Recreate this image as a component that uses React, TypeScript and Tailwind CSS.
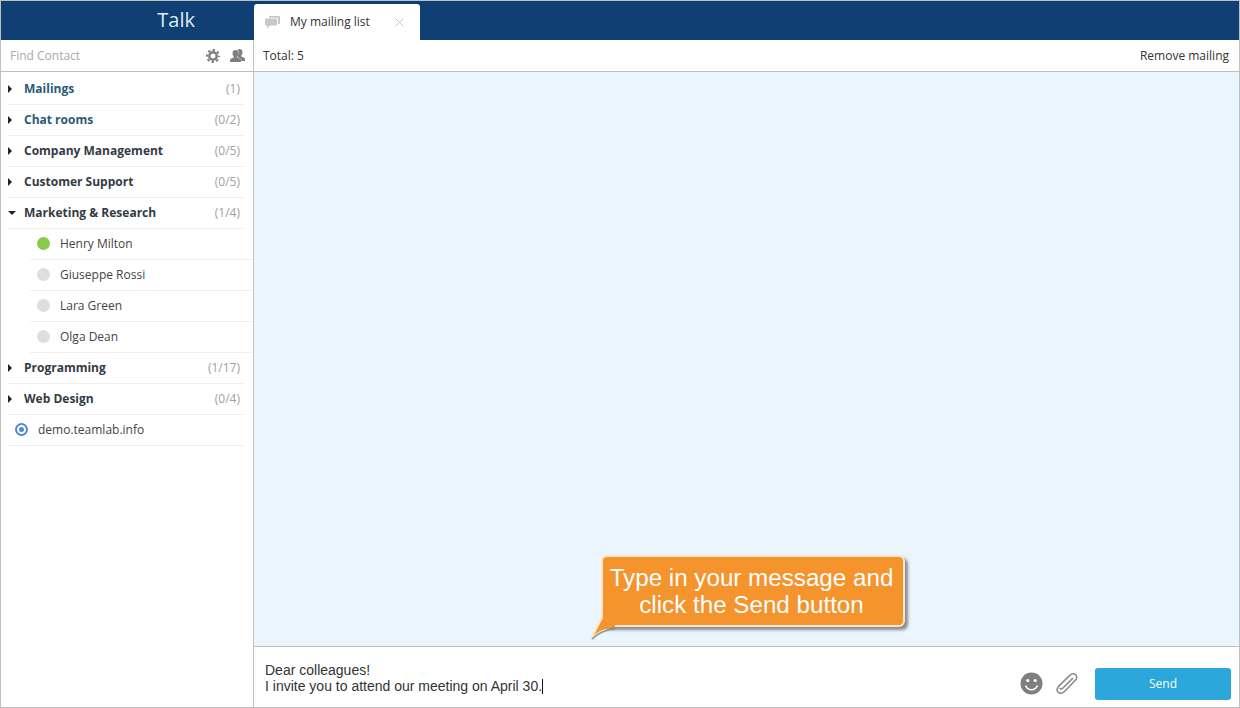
import { Fragment } from 'react'

type Group = { name: string; count: string; tint?: boolean; open?: boolean; contacts?: { name: string; online?: boolean }[] }

const GROUPS: Group[] = [
  { name: 'Mailings', count: '(1)', tint: true },
  { name: 'Chat rooms', count: '(0/2)', tint: true },
  { name: 'Company Management', count: '(0/5)' },
  { name: 'Customer Support', count: '(0/5)' },
  {
    name: 'Marketing & Research',
    count: '(1/4)',
    open: true,
    contacts: [
      { name: 'Henry Milton', online: true },
      { name: 'Giuseppe Rossi' },
      { name: 'Lara Green' },
      { name: 'Olga Dean' },
    ],
  },
  { name: 'Programming', count: '(1/17)' },
  { name: 'Web Design', count: '(0/4)' },
]

function GroupRow({ group }: { group: Group }) {
  return (
    <div className="mr-[9px] ml-[7px] flex h-[31px] items-center justify-between border-b border-[#f0f0f0] pb-px pr-[4px]">
      <div className="flex items-center">
        <span className="flex w-[16px] items-center">
          {group.open ? (
            <span className="h-0 w-0 border-x-[4px] border-t-[4px] border-x-transparent border-t-[#222]" />
          ) : (
            <span className="h-0 w-0 border-y-[4px] border-l-[4px] border-y-transparent border-l-[#222]" />
          )}
        </span>
        <span className={`text-[12px] font-bold ${group.tint ? 'text-[#2b5a73]' : 'text-[#333b45]'}`}>{group.name}</span>
      </div>
      <span className="text-[12px] text-[#a0a0a0]">{group.count}</span>
    </div>
  )
}

export default function App() {
  return (
    <div className="flex h-[708px] w-[1240px] flex-col overflow-hidden border border-[#c0c0c0] bg-white font-['Open_Sans',sans-serif] text-[#333]">
      <header className="flex h-[39px] shrink-0 items-end bg-[#103f73]">
        <div className="flex h-[38px] w-[253px] items-center justify-end self-start pr-[59px] text-[20px] text-[#dcebf5]">Talk</div>
        <div className="flex h-[36px] w-[166px] items-center rounded-t-[3px] bg-white pl-[11px] pr-[16px]">
          <svg width="15" height="13" viewBox="0 0 15 13" fill="#c8c8c8">
            <path d="M4 0h10a1 1 0 0 1 1 1v6a1 1 0 0 1-1 1h-1V1.800H4z" />
            <path d="M1 2.500h10a1 1 0 0 1 1 1v5a1 1 0 0 1-1 1H5l-3 3v-3H1a1 1 0 0 1-1-1v-5a1 1 0 0 1 1-1z" />
          </svg>
          <span className="ml-[10px] flex-1 text-[12px] text-[#333]">My mailing list</span>
          <svg width="9" height="9" viewBox="0 0 9 9" stroke="#c4c4c4" strokeWidth="1">
            <path d="M.5.5l8 8M8.500.5l-8 8" />
          </svg>
        </div>
      </header>

      <div className="flex min-h-0 flex-1">
        <aside className="flex w-[253px] shrink-0 flex-col border-r border-[#c0c0c0]">
          <div className="mb-[2px] flex h-[32px] shrink-0 items-center border-b border-[#c0c0c0] pl-[9px] pr-[8px]">
            <span className="flex-1 text-[12px] text-[#a9a9a9]">Find Contact</span>
            <svg width="14" height="14" viewBox="0 0 14 14" fill="none" stroke="#7f7f7f">
              <circle cx="7" cy="7" r="6" strokeWidth="2" strokeDasharray="2.400 2.312" strokeDashoffset="1.200" />
              <circle cx="7" cy="7" r="3.700" strokeWidth="2.400" />
            </svg>
            <svg className="ml-[10px]" width="15" height="13" viewBox="0 0 15 13" fill="#7f7f7f">
              <path d="M9.500 0c2 0 3 1.500 3 3.200 0 1.300-.5 2.500-1.200 3.100v1.200c1 .5 3.700 1 3.700 2.500V12h-3.500c0-2-1.700-2.800-3.500-3.500V6C9 5 9 1.500 7.300.8 7.900.300 8.600 0 9.500 0z" />
              <path d="M5.500 1c2 0 3 1.500 3 3.200 0 1.300-.5 2.500-1.200 3.100v1.200c1 .5 3.700 1 3.700 2.500V13H0v-2c0-1.500 2.700-2 3.700-2.500V7.300C3 6.700 2.500 5.500 2.500 4.200 2.500 2.500 3.500 1 5.500 1z" />
            </svg>
          </div>
          {GROUPS.map((group) => (
            <Fragment key={group.name}>
              <GroupRow group={group} />
              {group.contacts?.map((contact) => (
                <div
                  key={contact.name}
                  className="ml-[29px] flex h-[31px] items-center border-b border-[#f0f0f0] pb-px pl-[7px]"
                >
                  <span className={`h-[13px] w-[13px] rounded-full ${contact.online ? 'bg-[#8cc84b]' : 'bg-[#dedede]'}`} />
                  <span className="ml-[10px] text-[12px] text-[#444]">{contact.name}</span>
                </div>
              ))}
            </Fragment>
          ))}
          <div className="mr-[9px] ml-[7px] flex h-[31px] items-center border-b border-[#f0f0f0] pb-px pl-[7px]">
            <span className="flex h-[13px] w-[13px] items-center justify-center rounded-full border-2 border-[#4a8bd6]">
              <span className="h-[5px] w-[5px] rounded-full bg-[#4a8bd6]" />
            </span>
            <span className="ml-[10px] text-[12px] text-[#444]">demo.teamlab.info</span>
          </div>
        </aside>

        <main className="relative flex min-w-0 flex-1 flex-col">
          <div className="flex h-[32px] shrink-0 items-center justify-between border-b border-[#c0c0c0] pl-[9px] pr-[10px] text-[12px] text-[#333]">
            <span>Total: 5</span>
            <span>Remove mailing</span>
          </div>
          <div className="flex-1 bg-[#ebf5fe]" />
          <div className="flex h-[61px] shrink-0 items-start border-t border-[#c0c0c0] pl-[11px] pr-[8px]">
            <div className="flex-1 pt-[15px] font-['Liberation_Sans',sans-serif] text-[14px] leading-[16px] text-[#333]">
              <div>Dear colleagues!</div>
              <div className="flex items-center">
                I invite you to attend our meeting on April 30.
                <span className="h-[15px] w-px bg-[#111]" />
              </div>
            </div>
            <svg className="mt-[25px]" width="23" height="23" viewBox="0 0 23 23">
              <circle cx="11.500" cy="11.500" r="11" fill="#7f7f7f" />
              <circle cx="7.800" cy="8.500" r="1.600" fill="#fff" />
              <circle cx="15.200" cy="8.500" r="1.600" fill="#fff" />
              <path d="M5.500 13.500c1.500 3.300 3.700 4.300 6 4.300s4.500-1 6-4.300" fill="none" stroke="#fff" strokeWidth="1.600" />
            </svg>
            <svg className="mt-[25px] ml-[12px]" width="24" height="23" viewBox="0 0 24 23" fill="none" stroke="#8a8a8a" strokeWidth="1.600" strokeLinecap="round">
              <path d="M6.500 11.500l8.500-8.300c1.800-1.700 4.300-1.800 5.700-.4s1.400 3.800-.3 5.500L9.700 19.300c-2.200 2.200-5 2.600-6.600 1-1.600-1.600-1.300-4.200.9-6.400l9.300-9.200" />
              <path d="M17.500 6.500l-9.800 9.700c-.9.900-2 1.100-2.600.4" />
            </svg>
            <button
              type="button"
              className="mt-[21px] ml-[16px] h-[32px] w-[136px] rounded-[3px] bg-[#2ca7dc] text-[12px] text-white"
            >
              Send
            </button>
          </div>

          {/* hint over the message area */}
          <div className="absolute top-[515px] left-[347px] flex h-[72px] w-[304px] flex-col items-center justify-center rounded-[6px] border-2 border-[#fde5c8] bg-[#f5932d] pr-[3px] font-['Liberation_Sans',sans-serif] text-[24.2px] leading-[27px] text-white shadow-[3px_3px_3px_rgba(70,70,70,0.6)]">
            <span>Type in your message and</span>
            <span>click the Send button</span>
          </div>
          <svg className="absolute top-[572px] left-[334px]" width="34" height="30" viewBox="0 0 34 30">
            <path d="M4 27C9 22 16 18 27 16.500" stroke="#8b8b78" strokeOpacity="0.8" strokeWidth="2" fill="none" />
            <path d="M15 4L4 25C9 20 16 16 27 15V4z" fill="#f5932d" />
            <path d="M14.500 4.500L4 25" stroke="#fde5c8" strokeWidth="2" fill="none" />
          </svg>
        </main>
      </div>
    </div>
  )
}
